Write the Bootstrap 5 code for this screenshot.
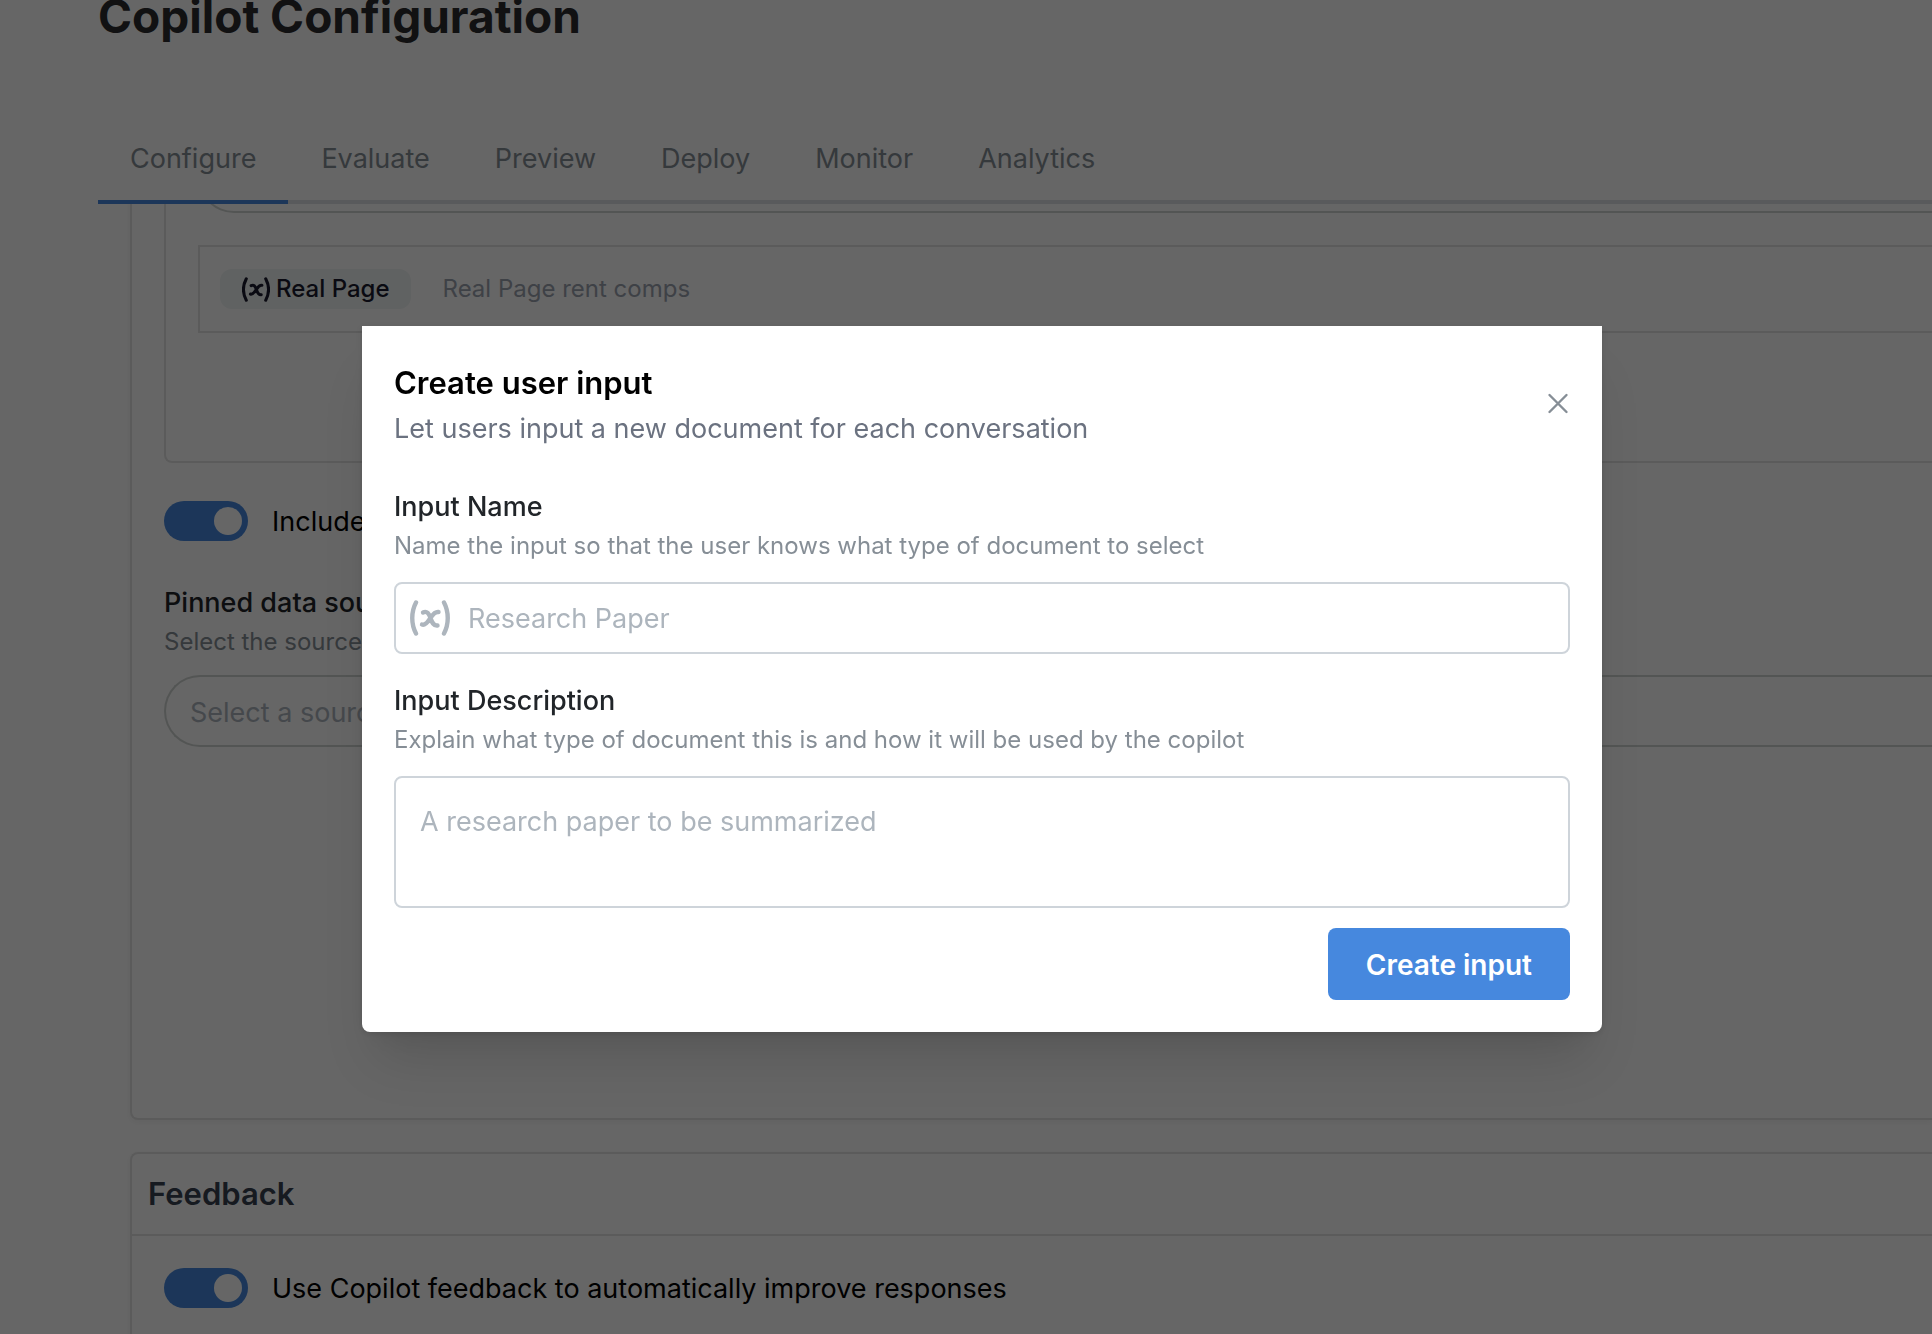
<!DOCTYPE html>
<html lang="en">
<head>
<meta charset="utf-8">
<meta name="viewport" content="width=device-width, initial-scale=1">
<title>Copilot Configuration</title>
<link href="https://cdn.jsdelivr.net/npm/bootstrap@5.3.0/dist/css/bootstrap.min.css" rel="stylesheet">
<style>
  :root { --brand: #4688de; --line: #e4e4e4; --line-strong: #ced4da; --muted: #868e96; --faint: #adb5bd; }
  body { font-family: Inter, "Liberation Sans", sans-serif; font-size: 27px; line-height: 40px; color: #000; background: #fff; }
  .app-shell { min-height: 100vh; padding-left: 98px; }
  .page-title { font-size: 46px; line-height: 32px; font-weight: 700; color: #2c2c2e; }
  .tab-rail { margin-top: 84px; gap: 1px; border-bottom: 4px solid #dee2e6; }
  .tab-rail .nav-link { padding: 23px 32px 21px; margin-bottom: -4px; border-bottom: 4px solid transparent; border-radius: 0; color: var(--muted); line-height: 40px; }
  .tab-rail .nav-link.active { border-bottom-color: var(--brand); }
  .scroll-view { padding-left: 32px; }
  .scrolled { margin-top: -131px; }
  .panel { border: 2px solid var(--line); border-radius: 8px; background: #fff; box-shadow: 0 2px 6px rgba(0,0,0,.05); }
  .panel + .panel { margin-top: 32px; }
  .panel-main { padding: 32px 0 371px 32px; }
  .source-pane { border: 2px solid var(--line); border-radius: 8px; padding: 32px 0 128px 32px; margin-bottom: 38px; }
  .pill-field { display: block; width: 100%; height: 72px; padding: 2px 24px 0; border: 2px solid #d0d4d2; border-radius: 36px; background: #fff; color: #000; }
  .pill-field::placeholder, .plain-field::placeholder, .area-field::placeholder { color: var(--faint); opacity: 1; }
  .source-row { margin-top: 32px; height: 88px; padding-left: 20px; gap: 32px; border: 2px solid var(--line); font-size: 24px; }
  .source-tag { height: 40px; padding: 0 21px 0 22px; gap: 6px; border-radius: 12px; background: #f1f5f4; color: #1a1b2e; font-weight: 500; }
  .soft-text { color: #9ca3af; }
  .switch-row { gap: 24px; min-height: 40px; padding: 0; margin: 0; }
  .switch-row label { padding-top: 2px; line-height: 38px; }
  .switch-row .form-check-input { width: 84px; height: 40px; margin: 0; float: none; border: 0; border-radius: 20px; box-shadow: none;
    background-color: var(--brand); background-size: 40px 40px; background-position: right center;
    background-image: url("data:image/svg+xml,%3Csvg xmlns='http://www.w3.org/2000/svg' viewBox='0 0 40 40'%3E%3Ccircle cx='20' cy='20' r='14' fill='%23fff'/%3E%3C/svg%3E"); }
  .pinned-group { margin-top: 41px; }
  .field-label { display: block; font-weight: 500; line-height: 42px; color: #212529; }
  .field-hint { font-size: 24px; line-height: 36px; color: var(--muted); }
  .pinned-group .pill-field { margin-top: 15px; }
  .panel-head { height: 82px; padding-left: 16px; border-bottom: 2px solid var(--line); font-size: 31px; font-weight: 600; color: #374151; }
  .panel-body { padding: 32px; }
  .shade { --bs-backdrop-opacity: .6; }
  .input-modal { padding-left: 32px; }
  .input-modal .modal-dialog { max-width: 1240px; margin: 326px auto 32px; }
  .input-modal .modal-content { padding: 32px; border: 0; border-radius: 0 0 8px 8px; box-shadow: 0 40px 50px -14px rgba(0,0,0,.13), 0 14px 30px -10px rgba(0,0,0,.06), 0 2px 6px rgba(0,0,0,.1); }
  .dialog-title { font-size: 31px; line-height: 50px; font-weight: 600; color: #000; }
  .dialog-sub { line-height: 42px; color: #6b7280; }
  .close-x { padding: 0; border: 0; background: none; color: var(--muted); line-height: 0; }
  .field-group { margin-top: 26px; }
  .field-group.first-group { margin-top: 36px; }
  .boxed { margin-top: 18px; border: 2px solid var(--line-strong); border-radius: 8px; background: #fff; }
  .icon-field { height: 72px; padding-left: 14px; gap: 18px; color: var(--faint); }
  .plain-field { border: 0; outline: 0; padding: 2px 0 0; background: none; color: #212529; min-width: 0; }
  .area-field { display: block; width: 100%; height: 132px; padding: 24px; line-height: 40px; resize: none; color: #212529; }
  .btn-create { height: 72px; margin-top: 20px; padding: 2px 38px 0; border: 0; border-radius: 8px; background: var(--brand); color: #fff; font-size: 28px; font-weight: 600; }
</style>
</head>
<body class="overflow-hidden">
<svg class="d-none" xmlns="http://www.w3.org/2000/svg">
  <symbol id="var-icon" viewBox="0 0 40 36">
    <g fill="none" stroke="currentColor" stroke-width="4.4" stroke-linecap="round" stroke-linejoin="round">
      <path d="M6 2.500C1 12 1 24 6 33.500M34 2.500C39 12 39 24 34 33.500"/>
      <path d="M13 12.500c4-2 6 1 7.500 5.500s3 8 7 7.500M28.500 12c-4-.5-6 3-8 6s-5 8-8.500 6.500"/>
    </g>
  </symbol>
</svg>

<div class="app-shell">
  <header>
    <h1 class="page-title m-0">Copilot Configuration</h1>
    <nav class="nav tab-rail flex-nowrap" aria-label="Copilot sections">
      <a class="nav-link active" aria-current="page" href="#">Configure</a>
      <a class="nav-link" href="#">Evaluate</a>
      <a class="nav-link" href="#">Preview</a>
      <a class="nav-link" href="#">Deploy</a>
      <a class="nav-link" href="#">Monitor</a>
      <a class="nav-link" href="#">Analytics</a>
    </nav>
  </header>

  <main class="scroll-view overflow-hidden">
    <div class="scrolled">
      <section class="panel panel-main border-end-0 rounded-end-0">
        <div class="source-pane border-end-0 rounded-end-0">
          <input class="pill-field border-end-0 rounded-end-0" type="text" aria-label="Add a source">
          <div class="source-row d-flex align-items-center border-end-0">
            <span class="source-tag d-inline-flex align-items-center">
              <svg width="28" height="25" aria-hidden="true"><use href="#var-icon"/></svg>Real Page
            </span>
            <span class="soft-text">Real Page rent comps</span>
          </div>
        </div>
        <div class="form-check form-switch switch-row d-flex align-items-center">
          <input class="form-check-input" type="checkbox" role="switch" id="citations" checked>
          <label for="citations">Include citations</label>
        </div>
        <div class="pinned-group">
          <label class="field-label" for="pinned">Pinned data sources</label>
          <div class="field-hint soft-text">Select the sources</div>
          <input class="pill-field border-end-0 rounded-end-0" type="text" id="pinned" placeholder="Select a source">
        </div>
      </section>

      <section class="panel border-end-0 rounded-end-0">
        <h2 class="panel-head d-flex align-items-center m-0">Feedback</h2>
        <div class="panel-body">
          <div class="form-check form-switch switch-row d-flex align-items-center">
            <input class="form-check-input" type="checkbox" role="switch" id="feedback" checked>
            <label for="feedback">Use Copilot feedback to automatically improve responses</label>
          </div>
        </div>
      </section>
    </div>
  </main>
</div>

<div class="modal-backdrop shade show"></div>
<div class="modal input-modal d-block" role="dialog" aria-modal="true" aria-labelledby="dialog-title">
  <div class="modal-dialog">
    <form class="modal-content">
      <div class="d-flex align-items-center justify-content-between">
        <div>
          <h2 class="dialog-title m-0" id="dialog-title">Create user input</h2>
          <p class="dialog-sub m-0">Let users input a new document for each conversation</p>
        </div>
        <button class="close-x" type="button" aria-label="Close">
          <svg width="24" height="24" viewBox="0 0 24 24" fill="none" stroke="currentColor" stroke-width="2.400" stroke-linecap="round"><path d="M3.500 3l17 17M20.500 3l-17 17"/></svg>
        </button>
      </div>
      <div class="field-group first-group">
        <label class="field-label" for="input-name">Input Name</label>
        <div class="field-hint">Name the input so that the user knows what type of document to select</div>
        <div class="boxed icon-field d-flex align-items-center">
          <svg class="flex-shrink-0" width="40" height="36" aria-hidden="true"><use href="#var-icon"/></svg>
          <input class="plain-field flex-grow-1" type="text" id="input-name" placeholder="Research Paper">
        </div>
      </div>
      <div class="field-group">
        <label class="field-label" for="input-desc">Input Description</label>
        <div class="field-hint">Explain what type of document this is and how it will be used by the copilot</div>
        <textarea class="boxed area-field" id="input-desc" placeholder="A research paper to be summarized"></textarea>
      </div>
      <button class="btn btn-create align-self-end" type="submit">Create input</button>
    </form>
  </div>
</div>
<script src="https://cdn.jsdelivr.net/npm/bootstrap@5.3.0/dist/js/bootstrap.bundle.min.js"></script>
</body>
</html>
